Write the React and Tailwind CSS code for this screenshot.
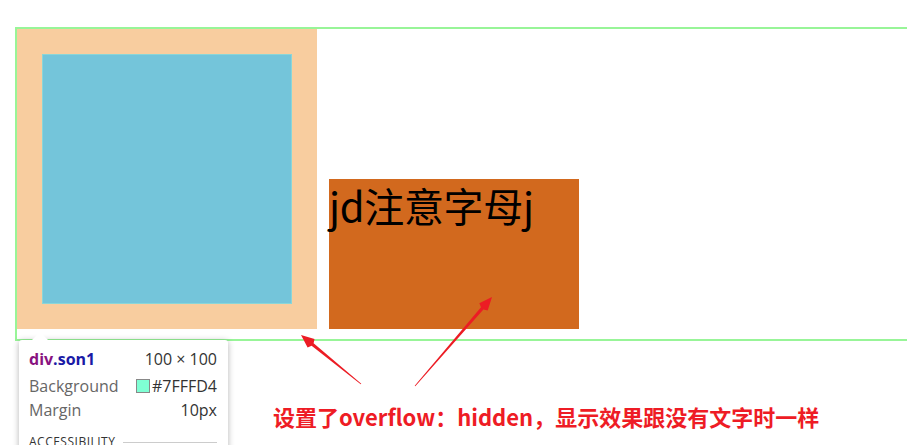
import React from "react";

function arrowPoints(tx, ty, hx, hy, headLen = 15, headHalf = 5.5, shaftEnd = 1.6, shaftStart = 0.4) {
  const dx = hx - tx, dy = hy - ty;
  const L = Math.hypot(dx, dy);
  const ux = dx / L, uy = dy / L;
  const nx = -uy, ny = ux;
  const bx = hx - ux * headLen, by = hy - uy * headLen;
  const pts = [
    [tx + nx * shaftStart, ty + ny * shaftStart],
    [bx + nx * shaftEnd, by + ny * shaftEnd],
    [bx + nx * headHalf + ux * 2, by + ny * headHalf + uy * 2],
    [hx, hy],
    [bx - nx * headHalf + ux * 2, by - ny * headHalf + uy * 2],
    [bx - nx * shaftEnd, by - ny * shaftEnd],
    [tx - nx * shaftStart, ty - ny * shaftStart],
  ];
  return pts.map((p) => p.map((v) => v.toFixed(1)).join(",")).join(" ");
}

export default function App() {
  return (
    <div className="relative w-[907px] h-[445px] overflow-hidden bg-white">
      {/* page content */}
      <div className="pt-[27px] pl-[15px]">
        <div className="flex items-end gap-[12px] border-2 border-r-0 border-[#98f598] pb-[10px]">
          <div className="bg-[#f8cd9f] p-[25px]">
            <div className="w-[250px] h-[250px] bg-[#74c5da] border border-[#8ad6d8]" />
          </div>
          <div
            className="w-[250px] h-[150px] bg-[#d2691e] text-black text-[40px] leading-[53px] tracking-[-0.3px] whitespace-nowrap"
            style={{ fontFamily: '"Noto Sans CJK SC", sans-serif' }}
          >
            jd注意字母j
          </div>
        </div>
      </div>

      {/* devtools tooltip */}
      <div
        className="absolute left-[19px] top-[340px] w-[209px] h-[120px] bg-white rounded-[3px] shadow-[0_1px_6px_rgba(0,0,0,0.3)] pl-[10px] pr-[11px] pt-[7px]"
        style={{ fontFamily: '"Open Sans", "Noto Sans", sans-serif' }}
      >
        <div className="absolute left-[13px] -top-[8px] w-0 h-0 border-l-[8px] border-r-[8px] border-b-[8px] border-l-transparent border-r-transparent border-b-white" />
        <div className="flex justify-between items-center h-[24px] text-[16px]">
          <span className="font-bold">
            <span className="text-[#881280]">div</span>
            <span className="text-[#1a1aa6]">.son1</span>
          </span>
          <span className="text-[#333]">100 × 100</span>
        </div>
        <div className="flex justify-between items-center h-[26px] mt-[2px] text-[16px]">
          <span className="text-[#666]">Background</span>
          <span className="flex items-center gap-[2px] text-[#333]">
            <span className="inline-block w-[14px] h-[14px] bg-[#7fffd4] border border-[#888]" />
            #7FFFD4
          </span>
        </div>
        <div className="flex justify-between items-center h-[22px] text-[16px]">
          <span className="text-[#666]">Margin</span>
          <span className="text-[#333]">10px</span>
        </div>
        <div className="flex items-center gap-[8px] mt-[12px] text-[12px] text-[#333] tracking-[0.5px]">
          <span>ACCESSIBILITY</span>
          <span className="flex-1 h-px bg-[#ccc]" />
        </div>
      </div>

      {/* arrows */}
      <svg className="absolute left-0 top-0 pointer-events-none" width="907" height="445">
        <polygon points={arrowPoints(361, 384, 301, 335)} fill="#ec1c24" />
        <polygon points={arrowPoints(415, 386, 492, 297)} fill="#ec1c24" />
      </svg>

      {/* annotation */}
      <div
        className="absolute left-[273px] top-[401px] text-[22px] leading-[30px] font-bold text-[#ee1c25] whitespace-nowrap"
        style={{ fontFamily: '"Noto Sans CJK SC", sans-serif' }}
      >
        设置了overflow：hidden，显示效果跟没有文字时一样
      </div>
    </div>
  );
}
